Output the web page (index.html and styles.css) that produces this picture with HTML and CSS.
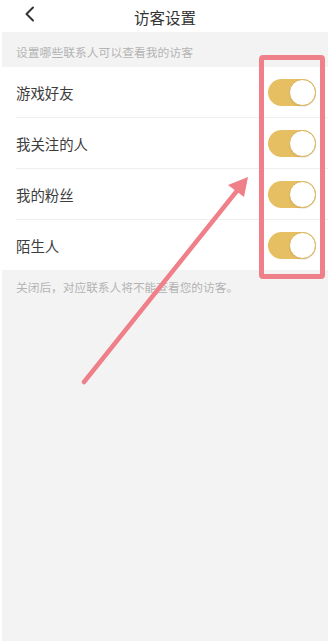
FILE: index.html
```html
<!DOCTYPE html>
<html lang="zh-CN">
<head>
<meta charset="utf-8">
<title>访客设置</title>
<link rel="stylesheet" href="styles.css">
</head>
<body>
<div class="page">
  <header class="nav">
    <svg class="back" width="12" height="16" viewBox="0 0 12 16"><path d="M9 1.5 L2.5 8 L9 14.5" fill="none" stroke="#333" stroke-width="2" stroke-linecap="round" stroke-linejoin="round"/></svg>
    <h1 class="title">访客设置</h1>
  </header>
  <p class="hint">设置哪些联系人可以查看我的访客</p>
  <ul class="list">
    <li class="row"><span class="label">游戏好友</span><span class="toggle"><span class="knob"></span></span></li>
    <li class="row"><span class="label">我关注的人</span><span class="toggle"><span class="knob"></span></span></li>
    <li class="row"><span class="label">我的粉丝</span><span class="toggle"><span class="knob"></span></span></li>
    <li class="row"><span class="label">陌生人</span><span class="toggle"><span class="knob"></span></span></li>
  </ul>
  <p class="note">关闭后，对应联系人将不能查看您的访客。</p>
</div>
<div class="mark-box"></div>
<svg class="mark-arrow" width="330" height="644" viewBox="0 0 330 644">
  <line x1="84" y1="382" x2="240" y2="187" stroke="#ef7f88" stroke-width="4.5" stroke-linecap="round"/>
  <polygon points="248,177 244,197 228,185" fill="#ef7f88"/>
</svg>
</body>
</html>
```
FILE: styles.css
```css
* { box-sizing: border-box; }
html, body { margin: 0; padding: 0; }
body {
  background: #fff;
  width: 330px;
  height: 644px;
  position: relative;
  overflow: hidden;
  font-family: "Noto Sans CJK SC", "Noto Sans", sans-serif;
}
.page {
  margin: 0 2px;
  height: 641px;
  background: #f3f3f3;
  display: flex;
  flex-direction: column;
}
.nav {
  height: 32px;
  background: #fff;
  display: flex;
  align-items: center;
  justify-content: center;
  position: relative;
}
.back {
  position: absolute;
  left: 22px;
  top: 6px;
}
.title {
  margin: 0;
  font-size: 15.5px;
  font-weight: normal;
  color: #333;
  line-height: 20px;
  padding-top: 2px;
}
.hint {
  margin: 0;
  height: 35px;
  padding: 11px 14px 0;
  font-size: 11.8px;
  line-height: 17px;
  color: #b3b3b3;
}
.list {
  list-style: none;
  margin: 0;
  padding: 0 0 0 14px;
  background: #fff;
}
.row {
  height: 51px;
  display: flex;
  align-items: center;
  justify-content: space-between;
  padding-right: 12px;
  border-bottom: 1px solid #eeeeee;
}
.row:last-child {
  border-bottom: none;
  height: 50px;
}
.label {
  font-size: 14.4px;
  color: #3d3d3d;
}
.toggle {
  width: 48px;
  height: 27px;
  border-radius: 14px;
  background: #e7bf63;
  display: flex;
  justify-content: flex-end;
}
.knob {
  width: 27px;
  height: 27px;
  border-radius: 50%;
  background: #fff;
  border: 1px solid #d9b35a;
  box-shadow: 0 1px 1px rgba(0,0,0,0.08);
}
.note {
  margin: 0;
  padding: 8px 14px 0;
  font-size: 11.7px;
  line-height: 17px;
  color: #b3b3b3;
}
.mark-box {
  position: absolute;
  left: 259px;
  top: 55px;
  width: 66px;
  height: 224px;
  border: 5px solid #ef8089;
  border-radius: 4px;
}
.mark-arrow {
  position: absolute;
  left: 0;
  top: 0;
}
```
